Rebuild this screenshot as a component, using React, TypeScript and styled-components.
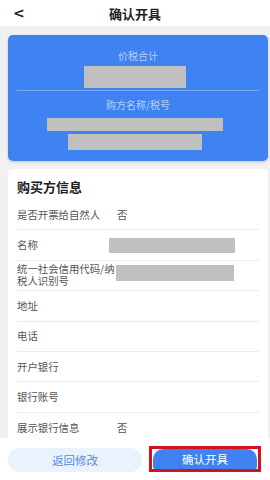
import React from "react";
import styled, { createGlobalStyle } from "styled-components";

const Global = createGlobalStyle`
  html, body { margin: 0; padding: 0; background: #ffffff; }
  body { font-family: "Noto Sans CJK SC", "Noto Sans", sans-serif; }
  * { box-sizing: border-box; }
`;

const Page = styled.div`
  width: 270px;
  height: 480px;
  display: flex;
  flex-direction: column;
  background: #f1f1f1;
  overflow: hidden;
`;

const Header = styled.div`
  height: 26px;
  flex: none;
  background: #ffffff;
  display: grid;
  grid-template-columns: 40px 1fr 40px;
  align-items: center;
`;

const Back = styled.span`
  padding-left: 13px;
  font-size: 14px;
  font-weight: 700;
  color: #222;
  line-height: 1;
  font-family: "DejaVu Sans", sans-serif;
`;

const Title = styled.h1`
  margin: 0;
  text-align: center;
  font-size: 13px;
  font-weight: 700;
  color: #222;
  line-height: 1;
`;

const Scroll = styled.div`
  flex: 1;
  overflow-y: scroll;
  padding: 9px 2px 12px 8px;
  display: flex;
  flex-direction: column;
  gap: 8px;
  &::-webkit-scrollbar { width: 6px; }
  &::-webkit-scrollbar-track { background: #f8f8f8; }
  &::-webkit-scrollbar-thumb {
    background: #c2c2c2;
    border-left: 1px solid #f1f1f1;
    border-right: 2px solid #f8f8f8;
  }
`;

const SummaryCard = styled.section`
  flex: none;
  background: #3f83f3;
  border-radius: 5px;
  box-shadow: 0 1px 3px rgba(0, 0, 0, 0.18);
  padding: 13px 9px 11px;
  display: flex;
  flex-direction: column;
  align-items: center;
`;

const SumLabel = styled.div`
  font-size: 10px;
  line-height: 16px;
  color: rgba(255, 255, 255, 0.62);
`;

const Redact = styled.div<{ $w: number; $h: number; $mt?: number; $ml?: number }>`
  flex: none;
  width: ${(p) => p.$w}px;
  height: ${(p) => p.$h}px;
  margin-top: ${(p) => p.$mt ?? 0}px;
  margin-left: ${(p) => p.$ml ?? 0}px;
  background: #c0c0c0;
`;

const Divider = styled.div`
  align-self: stretch;
  height: 1px;
  background: rgba(255, 255, 255, 0.3);
  margin: 2px 0 6px;
`;

const InfoCard = styled.section`
  flex: none;
  background: #ffffff;
  border-radius: 4px;
  box-shadow: 0 1px 2px rgba(0, 0, 0, 0.06);
  padding: 0 9px;
`;

const CardTitle = styled.h2`
  margin: 0;
  padding: 10px 0 6px;
  font-size: 13px;
  line-height: 15px;
  font-weight: 700;
  color: #222;
`;

const Row = styled.div<{ $last?: boolean }>`
  height: 30.4px;
  display: flex;
  align-items: center;
  border-bottom: ${(p) => (p.$last ? "none" : "1px solid #ececec")};
`;

const Label = styled.div`
  width: 101px;
  flex: none;
  font-size: 10.4px;
  line-height: 12px;
  color: #555;
  word-break: break-all;
`;

const Value = styled.div`
  flex: 1;
  display: flex;
  align-items: center;
  font-size: 10.4px;
  color: #555;
`;

const Plain = styled.span`
  margin-left: -1px;
`;

const BottomBar = styled.div`
  flex: none;
  height: 42px;
  background: #ffffff;
  display: grid;
  grid-template-columns: 134px 112px;
  gap: 7px;
  padding: 8px 0 0 8px;
  align-items: start;
`;

const GhostButton = styled.button`
  height: 24px;
  border: none;
  border-radius: 12px;
  background: #eaf2fd;
  color: #5289e0;
  font-family: inherit;
  font-size: 11.5px;
  padding: 0;
  margin-top: 2px;
`;

const Highlight = styled.div`
  height: 26px;
  border: 3px solid #d2121d;
  display: flex;
  background: #ffffff;
`;

const PrimaryButton = styled.button`
  flex: 1;
  margin: 0 1px 0 1px;
  border: none;
  border-radius: 10px 10px 2px 2px;
  background: #3f83f3;
  color: #ffffff;
  font-family: inherit;
  font-size: 11.5px;
  padding: 0;
`;

type R = { label: string; value?: React.ReactNode };

const buyerRows: R[] = [
  { label: "是否开票给自然人", value: <Plain>否</Plain> },
  { label: "名称", value: <Redact $w={126} $h={15} $ml={-9} /> },
  { label: "统一社会信用代码/纳税人识别号", value: <Redact $w={118} $h={16} $mt={-4} $ml={-2} /> },
  { label: "地址" },
  { label: "电话" },
  { label: "开户银行" },
  { label: "银行账号" },
  { label: "展示银行信息", value: <Plain>否</Plain> },
];

const sellerRows: R[] = [
  { label: "名称" },
  { label: "统一社会信用代码/纳税人识别号" },
  { label: "地址" },
  { label: "电话" },
  { label: "开户银行" },
  { label: "银行账号" },
  { label: "展示银行信息", value: <Plain>否</Plain> },
  { label: "备注" },
  { label: "收票人邮箱" },
  { label: "收票人手机" },
];

function Card({ title, rows }: { title: string; rows: R[] }) {
  return (
    <InfoCard>
      <CardTitle>{title}</CardTitle>
      {rows.map((r, i) => (
        <Row key={i} $last={i === rows.length - 1}>
          <Label>{r.label}</Label>
          <Value>{r.value}</Value>
        </Row>
      ))}
    </InfoCard>
  );
}

export default function App() {
  return (
    <Page>
      <Global />
      <Header>
        <Back>&lt;</Back>
        <Title>确认开具</Title>
        <span />
      </Header>
      <Scroll>
        <SummaryCard>
          <SumLabel>价税合计</SumLabel>
          <Redact $w={102} $h={22} $mt={2} $ml={-6} />
          <Divider />
          <SumLabel>购方名称/税号</SumLabel>
          <Redact $w={176} $h={13} $mt={5} $ml={-6} />
          <Redact $w={134} $h={16} $mt={3} $ml={-6} />
        </SummaryCard>
        <Card title="购买方信息" rows={buyerRows} />
        <Card title="销售方信息" rows={sellerRows} />
      </Scroll>
      <BottomBar>
        <GhostButton>返回修改</GhostButton>
        <Highlight>
          <PrimaryButton>确认开具</PrimaryButton>
        </Highlight>
      </BottomBar>
    </Page>
  );
}
